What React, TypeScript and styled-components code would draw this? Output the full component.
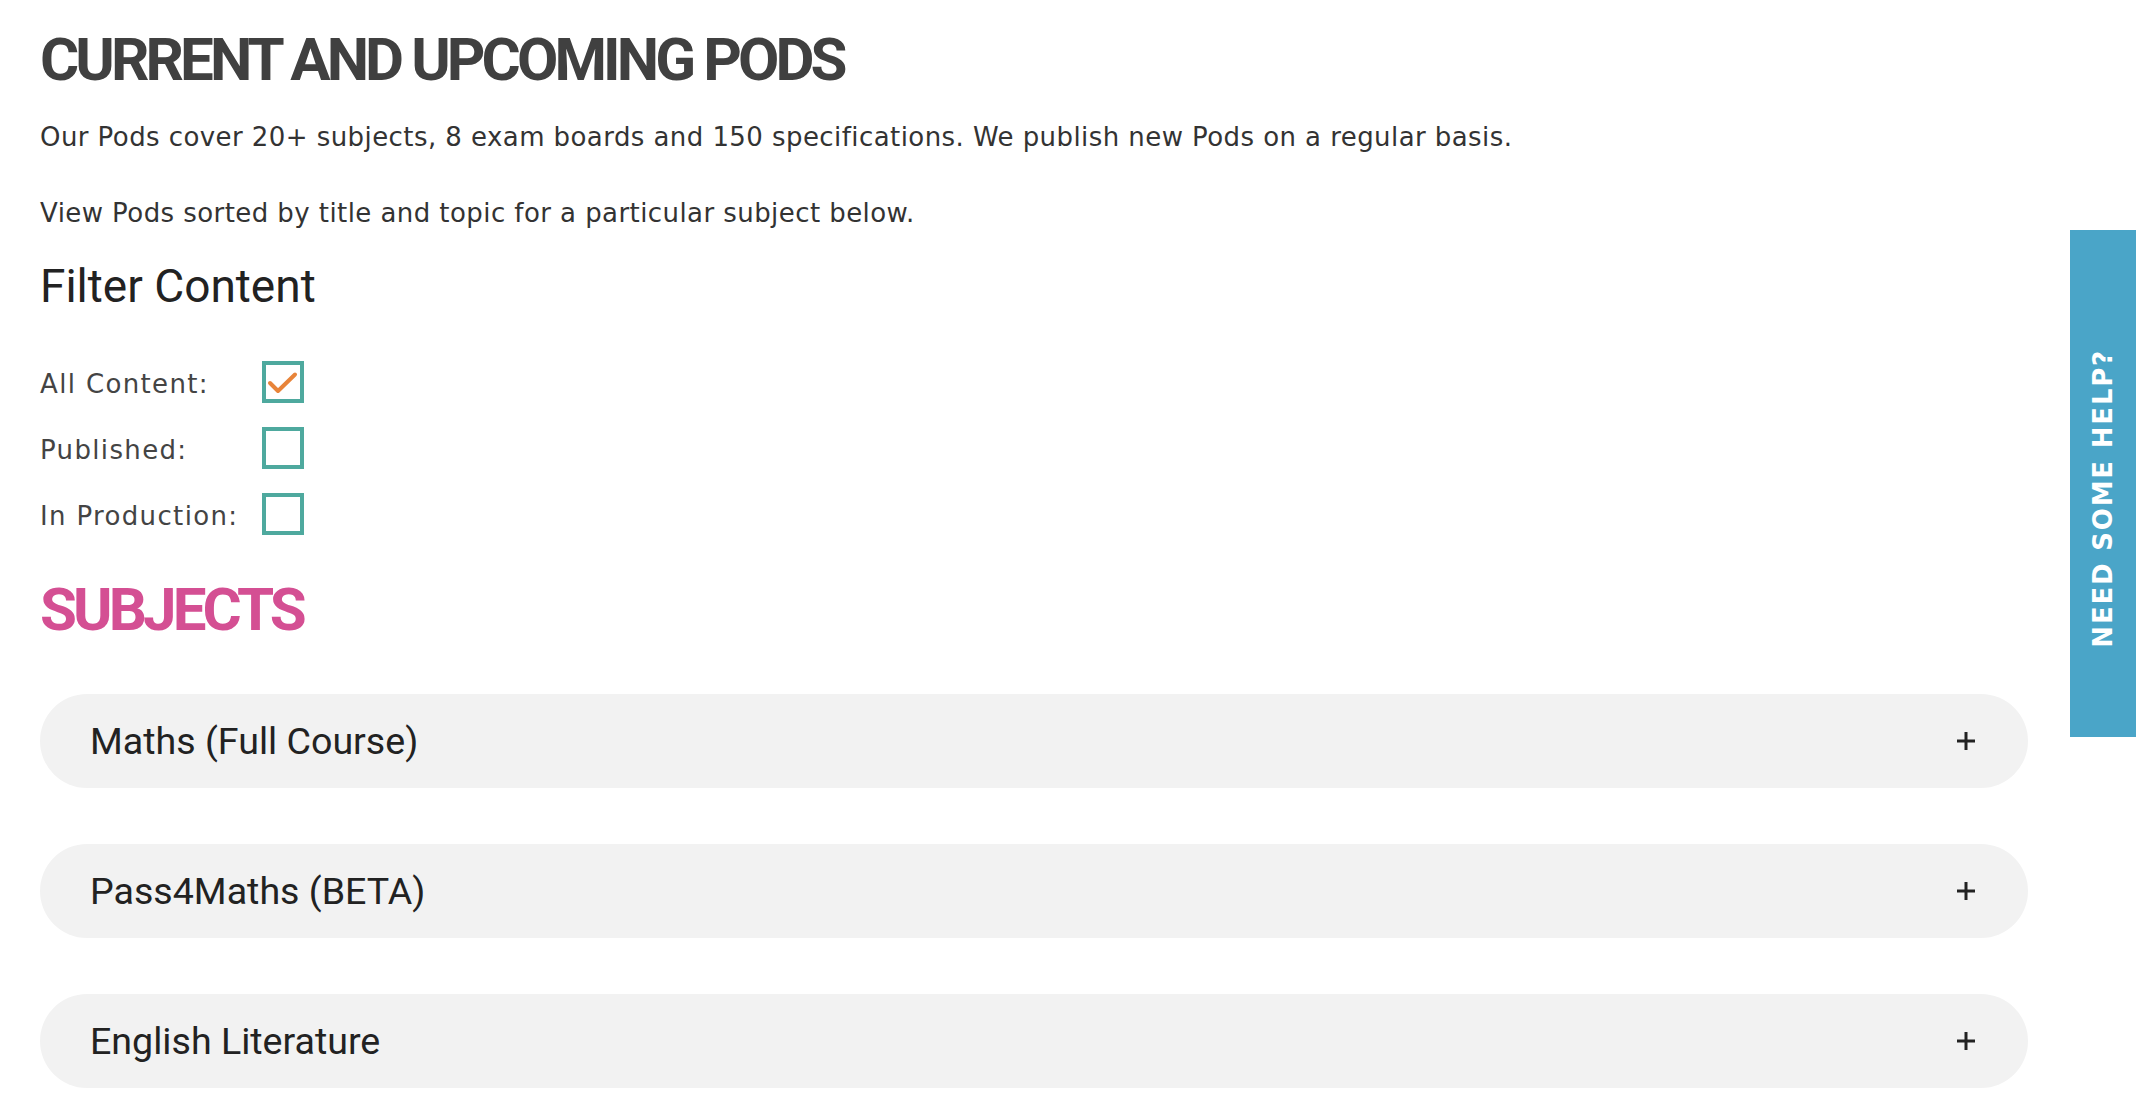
import React from "react";
import styled, { createGlobalStyle } from "styled-components";

const GlobalStyle = createGlobalStyle`
  html, body {
    margin: 0;
    padding: 0;
    background: #ffffff;
  }
  body {
    font-family: "DejaVu Sans", Verdana, sans-serif;
  }
`;

const Page = styled.main`
  padding: 0 108px 0 40px;
  display: flex;
  flex-direction: column;
`;

const Title = styled.h1<{ $color?: string; $top: number }>`
  margin: ${(p) => p.$top}px 0 0;
  font-family: Roboto, "Liberation Sans", sans-serif;
  font-weight: 700;
  font-size: 60px;
  line-height: 60px;
  letter-spacing: -3.9px;
  color: ${(p) => p.$color ?? "#404040"};
  text-transform: uppercase;
`;

const Paragraph = styled.p<{ $top: number }>`
  margin: ${(p) => p.$top}px 0 0;
  font-family: "DejaVu Sans", Verdana, sans-serif;
  font-size: 26px;
  line-height: 36px;
  letter-spacing: 0.43px;
  color: #333333;
`;

const FilterTitle = styled.h3`
  margin: 28px 0 0;
  font-family: Roboto, "Liberation Sans", sans-serif;
  font-weight: 400;
  font-size: 46px;
  line-height: 54px;
  color: #222222;
`;

const FilterList = styled.div`
  margin-top: 48px;
  display: flex;
  flex-direction: column;
  gap: 24px;
`;

const FilterRow = styled.label`
  display: grid;
  grid-template-columns: 222px 42px;
  align-items: center;
  height: 42px;
`;

const FilterLabel = styled.span`
  padding-top: 3px;
  font-family: "DejaVu Sans", Verdana, sans-serif;
  font-size: 26px;
  letter-spacing: 1.35px;
  color: #444444;
`;

const CheckBox = styled.span`
  box-sizing: border-box;
  width: 42px;
  height: 42px;
  border: 4px solid #4ea99e;
  background: #ffffff;
  display: block;
`;

const Accordion = styled.div`
  margin-top: 54px;
  display: flex;
  flex-direction: column;
  gap: 56px;
`;

const SubjectPill = styled.button`
  all: unset;
  box-sizing: border-box;
  height: 94px;
  border-radius: 47px;
  background: #f2f2f2;
  display: flex;
  align-items: center;
  justify-content: space-between;
  padding: 0 52px 0 50px;
  cursor: pointer;
`;

const SubjectName = styled.span`
  font-family: Roboto, "Liberation Sans", sans-serif;
  font-size: 37.6px;
  color: #222222;
`;

const HelpTab = styled.a`
  position: fixed;
  right: 0;
  top: 230px;
  width: 66px;
  height: 507px;
  box-sizing: border-box;
  padding-top: 30px;
  background: #4aa5c8;
  display: flex;
  align-items: center;
  justify-content: center;
  text-decoration: none;
`;

const HelpText = styled.span`
  writing-mode: vertical-rl;
  transform: rotate(180deg);
  font-family: "DejaVu Sans", Verdana, sans-serif;
  font-weight: 700;
  font-size: 26px;
  letter-spacing: 1.8px;
  color: #ffffff;
  white-space: nowrap;
`;

const Check = () => (
  <svg width="34" height="34" viewBox="0 0 34 34" style={{ display: "block" }}>
    <polyline
      points="4,18 12,26 29,9.5"
      fill="none"
      stroke="#e8843a"
      strokeWidth="4"
      strokeLinecap="round"
      strokeLinejoin="round"
    />
  </svg>
);

const Plus = () => (
  <svg width="20" height="20" viewBox="0 0 20 20">
    <path d="M10 1 V19 M1 10 H19" stroke="#222222" strokeWidth="3" />
  </svg>
);

const filters = [
  { label: "All Content:", checked: true },
  { label: "Published:", checked: false },
  { label: "In Production:", checked: false },
];

const subjects = ["Maths (Full Course)", "Pass4Maths (BETA)", "English Literature"];

export default function App() {
  return (
    <>
      <GlobalStyle />
      <Page>
        <Title $top={30}>Current and Upcoming Pods</Title>
        <Paragraph $top={29}>
          Our Pods cover 20+ subjects, 8 exam boards and 150 specifications. We publish new Pods on a regular basis.
        </Paragraph>
        <Paragraph $top={40}>View Pods sorted by title and topic for a particular subject below.</Paragraph>
        <FilterTitle>Filter Content</FilterTitle>
        <FilterList>
          {filters.map((f) => (
            <FilterRow key={f.label}>
              <FilterLabel>{f.label}</FilterLabel>
              <CheckBox>{f.checked && <Check />}</CheckBox>
            </FilterRow>
          ))}
        </FilterList>
        <Title $top={45} $color="#d44f93">Subjects</Title>
        <Accordion>
          {subjects.map((s) => (
            <SubjectPill key={s}>
              <SubjectName>{s}</SubjectName>
              <Plus />
            </SubjectPill>
          ))}
        </Accordion>
      </Page>
      <HelpTab href="#">
        <HelpText>NEED SOME HELP?</HelpText>
      </HelpTab>
    </>
  );
}
